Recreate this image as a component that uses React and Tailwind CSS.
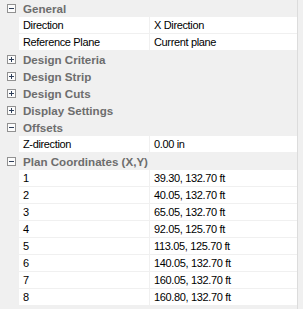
const sections = [
  {
    title: 'General',
    open: true,
    rows: [
      ['Direction', 'X Direction'],
      ['Reference Plane', 'Current plane'],
    ],
  },
  { title: 'Design Criteria', open: false },
  { title: 'Design Strip', open: false },
  { title: 'Design Cuts', open: false },
  { title: 'Display Settings', open: false },
  { title: 'Offsets', open: true, rows: [['Z-direction', '0.00 in']] },
  {
    title: 'Plan Coordinates (X,Y)',
    open: true,
    rows: [
      ['1', '39.30, 132.70 ft'],
      ['2', '40.05, 132.70 ft'],
      ['3', '65.05, 132.70 ft'],
      ['4', '92.05, 125.70 ft'],
      ['5', '113.05, 125.70 ft'],
      ['6', '140.05, 132.70 ft'],
      ['7', '160.05, 132.70 ft'],
      ['8', '160.80, 132.70 ft'],
    ],
  },
];

function Expander({ open }) {
  return (
    <svg width="9" height="9" viewBox="0 0 9 9" className="shrink-0">
      <rect x="0.5" y="0.5" width="8" height="8" fill="#fcfcfc" stroke="#919191" />
      <line x1="2" y1="4.5" x2="7" y2="4.5" stroke="#2f3f5a" />
      {!open && <line x1="4.5" y1="2" x2="4.5" y2="7" stroke="#2f3f5a" />}
    </svg>
  );
}

export default function App() {
  return (
    <div
      className="w-[303px] h-[309px] bg-[#f0f0f0] flex overflow-hidden text-[11px] leading-none"
      style={{ fontFamily: '"Liberation Sans", Arial, sans-serif' }}
    >
      <div className="w-[297px] flex flex-col">
        {sections.map((s) => (
          <div key={s.title} className="flex flex-col">
            <div className="h-[17px] flex items-center pl-[7px] gap-[7px]">
              <Expander open={s.open} />
              <span className="font-bold text-[11.6px] text-[#6d6d6d]">{s.title}</span>
            </div>
            {s.open &&
              s.rows.map(([k, v]) => (
                <div key={k} className="h-[17px] flex pl-[19px] pb-px tracking-[-0.35px]">
                  <div className="w-[130px] bg-white flex items-center pl-[4px] text-black">{k}</div>
                  <div className="w-px bg-[#f0f0f0]" />
                  <div className="flex-1 bg-white flex items-center pl-[4px] text-black">{v}</div>
                </div>
              ))}
          </div>
        ))}
      </div>
      <div className="w-px bg-[#dcdcdc]" />
    </div>
  );
}
